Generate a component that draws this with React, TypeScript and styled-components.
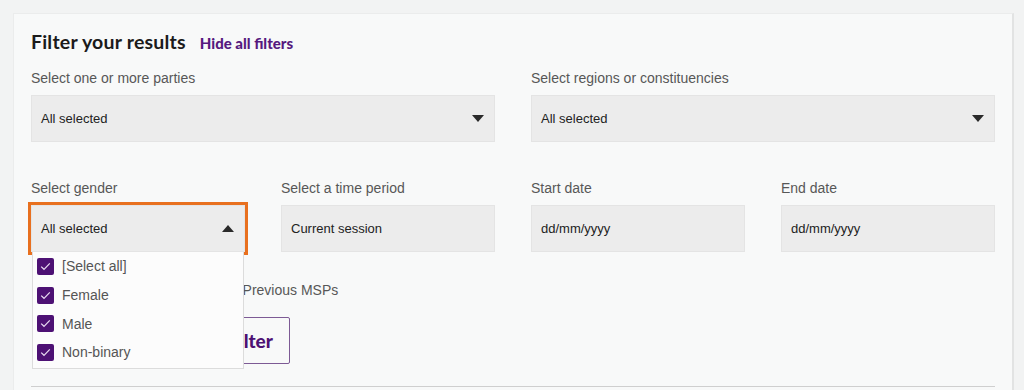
import React from "react";
import styled, { createGlobalStyle } from "styled-components";

const Global = createGlobalStyle`
  html, body { margin: 0; padding: 0; background: #f2f3f3; }
  body { font-family: "Liberation Sans", Arial, sans-serif; }
  * { box-sizing: border-box; }
`;

const Page = styled.div`
  padding: 13px 10px 0 13px;
  height: 390px;
  overflow: hidden;
`;

const Card = styled.section`
  background: #f8f9f9;
  border: 1px solid #ebecec;
  border-right: 2px solid #e2e3e3;
  border-bottom: none;
  padding: 15px 17px 0 17px;
  width: 1001px;
  height: 400px;
`;

const Header = styled.div`
  display: flex;
  align-items: baseline;
  gap: 14px;
  height: 25px;
`;

const Title = styled.h2`
  margin: 0;
  font-family: Lato, "Open Sans", sans-serif;
  font-weight: 700;
  font-size: 19.5px;
  line-height: 25px;
  color: #1b1b1b;
  letter-spacing: 0.2px;
`;

const HideLink = styled.a`
  font-family: Lato, "Open Sans", sans-serif;
  font-weight: 900;
  font-size: 15px;
  color: #56197f;
  text-decoration: none;
  cursor: pointer;
`;

const Grid = styled.div<{ $cols: number; $mt: number }>`
  display: grid;
  grid-template-columns: repeat(${(p) => p.$cols}, 1fr);
  column-gap: 36px;
  margin-top: ${(p) => p.$mt}px;
`;

const Field = styled.div`
  display: flex;
  flex-direction: column;
  gap: 8px;
  position: relative;
`;

const Label = styled.label`
  font-size: 14px;
  line-height: 18px;
  color: #575757;
`;

const Box = styled.div<{ $focused?: boolean }>`
  height: 47px;
  background: #ececec;
  border: 1px solid #e4e4e4;
  display: flex;
  align-items: center;
  justify-content: space-between;
  padding: 0 10px 0 9px;
  font-size: 13px;
  color: #222;
  outline: ${(p) => (p.$focused ? "3px solid #e8701f" : "none")};
`;

const Caret = styled.span<{ $up?: boolean }>`
  width: 0;
  height: 0;
  border-left: 6px solid transparent;
  border-right: 6px solid transparent;
  ${(p) =>
    p.$up ? "border-bottom: 7px solid #2a2a2a;" : "border-top: 7px solid #2a2a2a;"}
`;

const Menu = styled.ul`
  position: absolute;
  top: 100%;
  left: 1px;
  right: 1px;
  margin: 0;
  padding: 0 0 1px 0;
  list-style: none;
  background: #fcfcfc;
  border: 1px solid #dcdcdc;
  border-top: none;
  z-index: 5;
`;

const Option = styled.li`
  height: 28.7px;
  display: flex;
  align-items: center;
  gap: 8px;
  padding-left: 4px;
  font-size: 14px;
  color: #555;
`;

const Check = styled.span`
  width: 17px;
  height: 17px;
  border-radius: 2px;
  background: #4d1174;
  display: inline-flex;
  align-items: center;
  justify-content: center;
`;

const RadioRow = styled.div`
  display: flex;
  align-items: center;
  gap: 166px;
  margin-top: 29px;
  padding-left: 4px;
  height: 18px;
`;

const RadioItem = styled.label`
  display: flex;
  align-items: center;
  gap: 8px;
  font-size: 14px;
  color: #575757;
`;

const RadioDot = styled.span`
  width: 18px;
  height: 18px;
  border-radius: 50%;
  border: 1px solid #8a8a8a;
  background: #fff;
`;

const Buttons = styled.div`
  display: flex;
  gap: 12px;
  margin-top: 18px;
  padding-left: 4px;
`;

const Button = styled.button<{ $solid?: boolean }>`
  height: 47px;
  min-width: ${(p) => (p.$solid ? "114px" : "0")};
  padding: 0 16px;
  font-family: Lato, "Open Sans", sans-serif;
  font-weight: 900;
  font-size: 19px;
  color: ${(p) => (p.$solid ? "#fff" : "#4d1174")};
  background: ${(p) => (p.$solid ? "#4d1174" : "transparent")};
  border: 1px solid #7d5a95;
  border-radius: 2px;
`;

const Divider = styled.hr`
  border: none;
  border-top: 1px solid #cfcfcf;
  margin: 22px 0 0 0;
`;

const CheckIcon = () => (
  <svg width="11" height="9" viewBox="0 0 11 9">
    <path d="M1.2 4.6 L4 7.3 L9.8 1.4" fill="none" stroke="#e9dcf2" strokeWidth="1.2" />
  </svg>
);

const genders = ["[Select all]", "Female", "Male", "Non-binary"];

export default function App() {
  return (
    <>
      <Global />
      <Page>
        <Card>
          <Header>
            <Title>Filter your results</Title>
            <HideLink>Hide all filters</HideLink>
          </Header>

          <Grid $cols={2} $mt={15}>
            <Field>
              <Label>Select one or more parties</Label>
              <Box>
                All selected
                <Caret />
              </Box>
            </Field>
            <Field>
              <Label>Select regions or constituencies</Label>
              <Box>
                All selected
                <Caret />
              </Box>
            </Field>
          </Grid>

          <Grid $cols={4} $mt={37}>
            <Field>
              <Label>Select gender</Label>
              <Box $focused>
                All selected
                <Caret $up />
              </Box>
              <Menu>
                {genders.map((g) => (
                  <Option key={g}>
                    <Check>
                      <CheckIcon />
                    </Check>
                    {g}
                  </Option>
                ))}
              </Menu>
            </Field>
            <Field>
              <Label>Select a time period</Label>
              <Box>Current session</Box>
            </Field>
            <Field>
              <Label>Start date</Label>
              <Box>dd/mm/yyyy</Box>
            </Field>
            <Field>
              <Label>End date</Label>
              <Box>dd/mm/yyyy</Box>
            </Field>
          </Grid>

          <RadioRow>
            <RadioItem>
              <RadioDot />
              All
            </RadioItem>
            <RadioItem>Previous MSPs</RadioItem>
          </RadioRow>

          <Buttons>
            <Button $solid>Reset</Button>
            <Button>Apply filter</Button>
          </Buttons>

          <Divider />
        </Card>
      </Page>
    </>
  );
}
